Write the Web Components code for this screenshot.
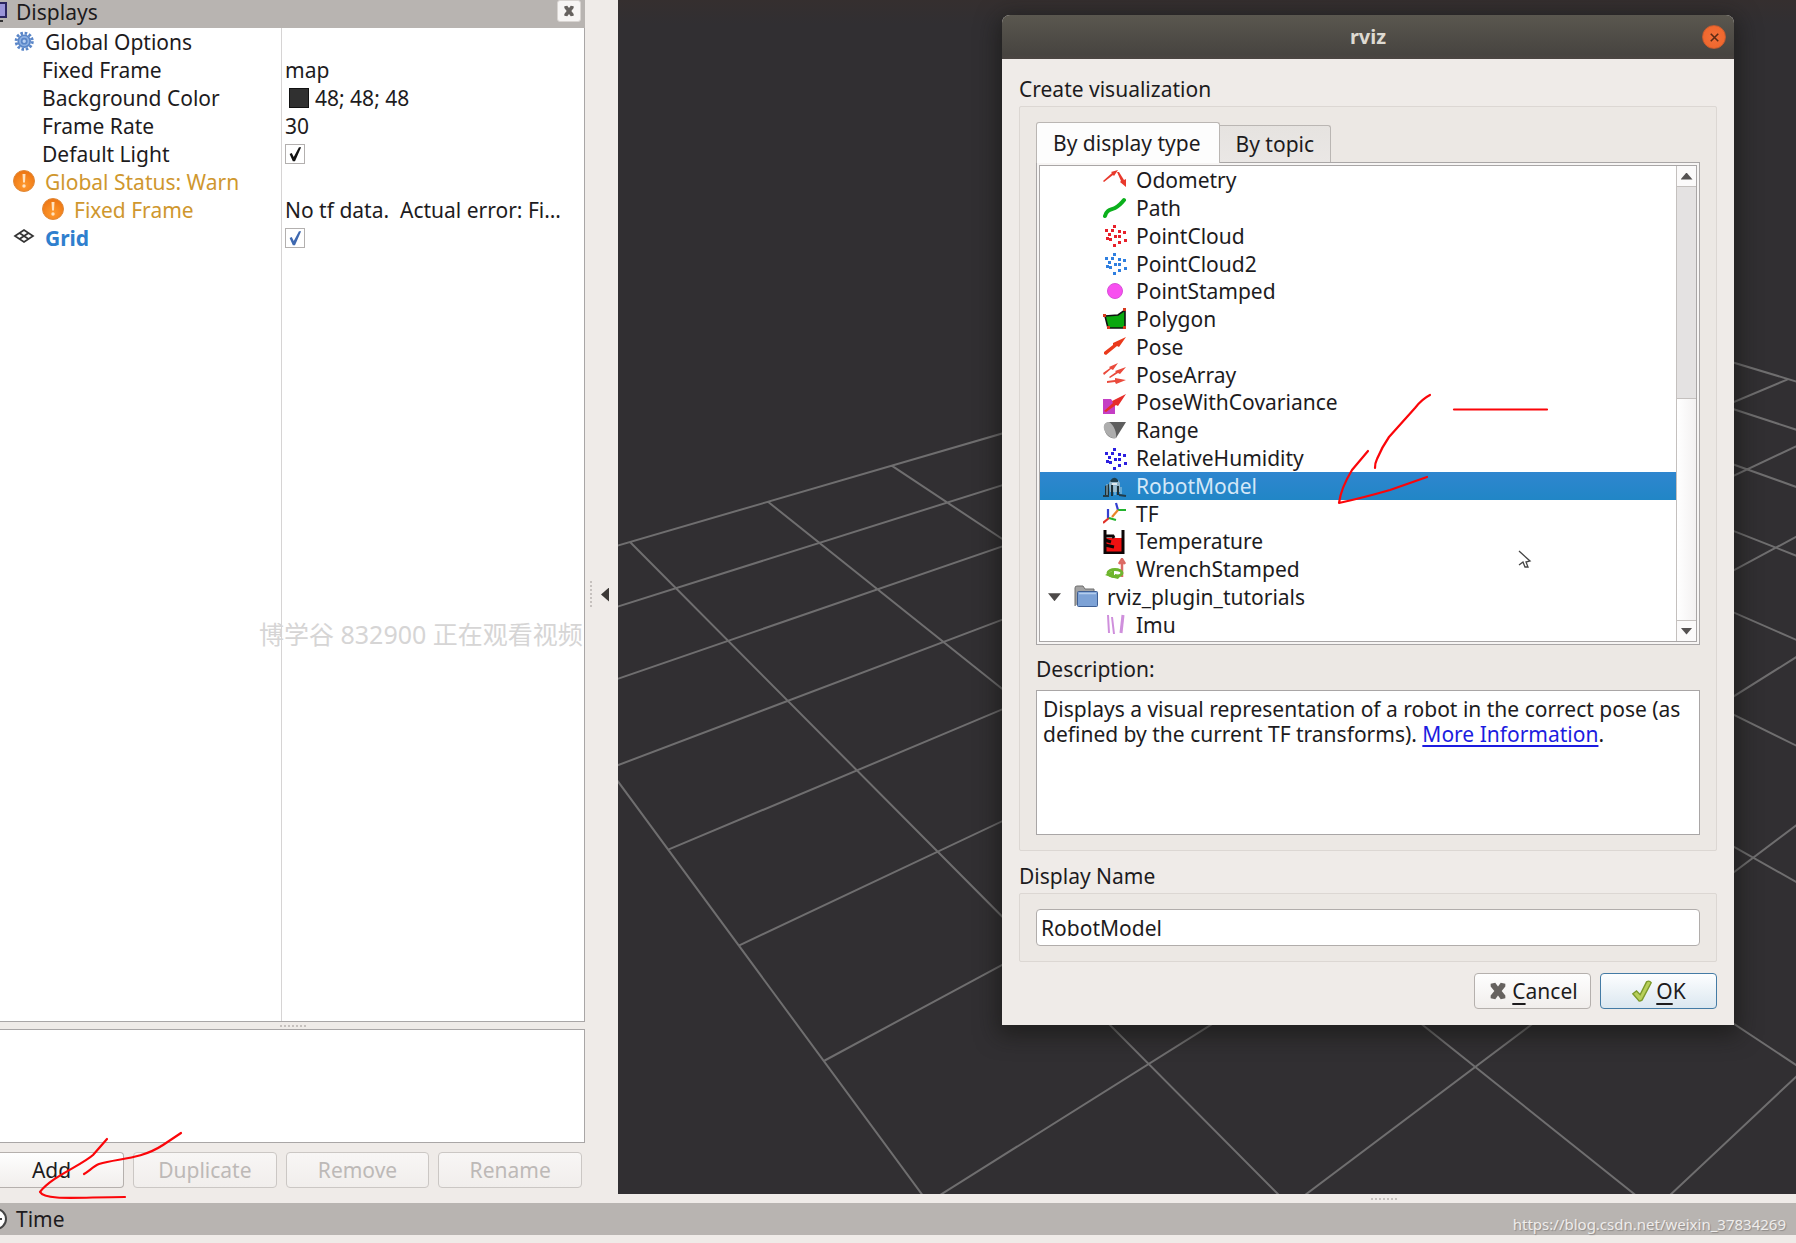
<!DOCTYPE html>
<html lang="en">
<head>
<meta charset="utf-8">
<title>rviz</title>
<style>
html,body{height:100%;margin:0}
body{overflow:hidden;background:#efebe8;color:#1d1b1d;
font:21px/28px "Noto Sans","Noto Sans CJK SC",sans-serif;
--panel:#efebe8;--bar:#b8b4b1;--edge:#a9a6a6;--soft:#dcd7d3}
</style>
</head>
<body>
<rviz-app></rviz-app>
<script>
const define = (name, html, setup) => customElements.define(name, class extends HTMLElement {
  connectedCallback() {
    if (this.shadowRoot) return;
    const root = this.attachShadow({ mode: 'open' });
    const t = document.createElement('template');
    t.innerHTML = '<style>*{box-sizing:border-box}:host{display:block;box-sizing:border-box}</style>' + html;
    root.append(t.content.cloneNode(true));
    if (setup) setup(root, this);
  }
});

/* ---- icons, drawn in a 24 x 24 box ---- */
const cloud = c => `<g fill="${c}">` + [[10,0],[2,4],[8,4],[15,5],[20,6],[5,8],[11,10],[15,10],[3,12],[6,13],[21,14],[15,16],[10,19]]
  .map(([x, y]) => `<rect x="${x}" y="${y + 1}" width="3" height="3"/>`).join('') + '</g>';
const arrow = 'M1 20L10 12L9 10L23 3L15 15L13 14L3 21Z';
const warn = '<defs><radialGradient id="w" cx=".5" cy=".7" r=".7"><stop offset="0" stop-color="#ff9a2e"/><stop offset="1" stop-color="#ec7412"/></radialGradient></defs><circle cx="12" cy="11" r="10.500" fill="url(#w)" stroke="#e08a3a"/><path d="M10.500 4h3l-.5 8.500h-2z" fill="#ffe3c0"/><circle cx="12" cy="16" r="1.700" fill="#ffe3c0"/>';
const ICONS = {
  odometry: '<g fill="#e8392c"><path d="M0 12L9 4L8 3L15 1L11 7L10 6L1 13Z"/><path d="M14 3L16 3L21 11L23 10L23 18L17 13L18 12Z"/></g>',
  path: '<path d="M2 19C4 12 8 13 12 11S17 8 21 3" fill="none" stroke="#0bb01c" stroke-width="4" stroke-linecap="round"/>',
  cloudRed: cloud('#e8202a'), cloudBlue: cloud('#2f7fe0'), cloudIndigo: cloud('#2c1fe0'),
  point: '<circle cx="12" cy="11" r="7.500" fill="#f84ff0" stroke="#d84fd8"/>',
  polygon: '<path d="M2 8L15 7L22 2V20L5 20Z" fill="#0aa80f" stroke="#111" stroke-width="1.600"/><g fill="#d63a1e"><rect y="6" width="3" height="3"/><rect x="20" y="0" width="3" height="3"/><rect x="4" y="18" width="3" height="3"/><rect x="20" y="18" width="3" height="3"/></g>',
  pose: '<path d="M1 17L10 10L10 8L23 2L16 12L14 11L3 20L1 19Z" fill="#ea3a1c"/>',
  poseArray: '<g fill="#ea4a3c"><path d="M0 10L7 5L6 4L15 0L10 7L8 6L1 12Z"/><path d="M6 14L13 9L12 8L23 4L17 11L15 10L7 15Z"/><path d="M4 18L12 17V15L23 17L13 21L12 19L4 20Z"/></g>',
  poseCov: `<path d="M0 8H8L12 14V23H0Z" fill="#c43ec4"/><path d="${arrow}" fill="#e62e2a"/>`,
  range: '<path d="M6 3H23L13 19C9 20 4 18 2 12C0 6 2 4 6 3Z" fill="#5e5e5e"/><path d="M6 3C11 6 14 14 13 19C8 20 3 16 1 10C0 6 2 3 6 3Z" fill="#adadad"/>',
  robot: '<path d="M6 9Q12 0 17 9V18H7Z" fill="#8fb4c8"/><path d="M7 7Q11 1 15 6V8H8Z" fill="#203f4c"/><path d="M2 12L6 10V21H2ZM8 11H10V22H8ZM14 12H16V21H14Z" fill="#1c3037"/><path d="M0 22H6M16 21L23 22" stroke="#223c49" stroke-width="2"/><path d="M9 9H14V11H9Z" fill="#dfe9ee"/><path d="M4 10V21M12 12V21M18 13V20" stroke="#a9cbdc"/>',
  tf: '<g fill="none" stroke-width="2.200"><path d="M5 16V7M15 8L13 1" stroke="#3340d0"/><path d="M6 16L0 21" stroke="#e03228"/><path d="M6 16L13 18M15 8H23" stroke="#22b32e"/><path d="M15 8L9 15" stroke="#e8852a"/></g>',
  temperature: '<rect x="3" y="8" width="17" height="15" fill="#f01010"/><path d="M2 0V23H20V0" fill="none" stroke="#0c0606" stroke-width="3"/><path d="M2 6H10L11 8M2 10L8 12M2 15L11 17" fill="none" stroke="#0c0606" stroke-width="3"/>',
  wrench: '<path d="M19 19V4M16 6L19 1L22 6" fill="none" stroke="#dc6a64" stroke-width="2.500"/><ellipse cx="12" cy="15" rx="7" ry="3.500" fill="none" stroke="#6eb52e" stroke-width="3"/><path d="M2 17L11 12V20ZM12 16L18 17L15 21L11 20Z" fill="#6eb52e"/>',
  folder: '<path d="M1 21V3Q1 1 3 1H9L11 4H20V8" fill="#a3a3a3" stroke="#6f6f6f"/><rect x="3.500" y="6.500" width="20" height="15" rx="1" fill="#7da2d6" stroke="#3f5f94"/><path d="M5 8.500H22" stroke="#b4cdee" stroke-width="1.500"/>',
  imu: '<g stroke="#cf8fdc" fill="none" stroke-width="2"><path d="M5 2L6 20M9 4L11 21"/><path d="M20 2L18 20" stroke-width="3"/></g>',
  gear: '<g transform="translate(2 1) scale(.85)" stroke="#5a86c8" fill="none"><circle cx="12" cy="12" r="9.500" stroke-width="3.500" stroke-dasharray="3 2"/><circle cx="12" cy="12" r="7" fill="#8db0e2" stroke-width="2"/><circle cx="12" cy="12" r="3" fill="#b8d0f2" stroke-width="2"/></g>',
  warn,
  grid: '<path d="M3 10L12 4L21 10L12 16ZM7.500 7L16.500 13M16.500 7L7.500 13" fill="none" stroke="#333" stroke-width="1.700"/>',
  monitor: '<rect x="-6" y="3" width="12" height="14" fill="#9a94d8" stroke="#2b2560" stroke-width="2"/><path d="M-2 21H3" stroke="#333" stroke-width="2"/>',
  clock: '<circle cx="-4" cy="12" r="10" fill="#fff" stroke="#444" stroke-width="2"/><path d="M0 12H2" stroke="#444" stroke-width="2"/>',
  cross: '<path d="M4 4L9 3L12 7L15 3L20 4L20 7L16 12L20 17L20 20L15 21L12 17L9 21L4 20L4 17L8 12L4 7Z" fill="#66625f"/>',
  tick: '<path d="M2 15L6 12L10 16L17 2Q20 0 22 3L12 22Q9 24 8 22Z" fill="#b7cf5a" stroke="#7c9a2c" stroke-width="1.500"/>',
  thin: '<path d="M6 6L18 18M18 6L6 18" stroke="#5b2a14" stroke-width="2.500"/>'
};
define('rviz-icon', '<style>:host{flex:none;width:24px;height:24px}svg{display:block;width:100%;height:100%}</style><svg viewBox="0 0 24 24" aria-hidden="true"></svg>',
  (root, el) => { root.querySelector('svg').innerHTML = ICONS[el.getAttribute('name')] || ''; });
const setIcon = (icon, name, box) => {
  const svg = icon.shadowRoot.querySelector('svg');
  svg.innerHTML = ICONS[name];
  if (box) svg.setAttribute('viewBox', box);
};

/* ---- push button ---- */
define('push-button', `<style>
:host{display:flex}
button{flex:1;display:flex;align-items:center;justify-content:center;gap:3px;height:36px;padding:0;font:inherit;color:inherit;
 border:1px solid #b5b0ad;border-radius:4px;background:linear-gradient(#fefefe,#f1eeec)}
button:disabled{color:#bdb9b7;border-color:#cbc7c4;background:linear-gradient(#f8f6f5,#f1eeec)}
:host([cut]) button{border-left:0;border-radius:0 4px 4px 0;padding-right:20px}
:host([primary]) button{border:1px solid #447ba5;background:linear-gradient(#fdfeff,#dbe7f0)}
</style><button type="button"><slot></slot></button>`,
  (root, el) => { root.querySelector('button').disabled = el.hasAttribute('off'); });

/* ---- title bar of a docked panel ---- */
define('dock-title', `<style>
:host{display:flex;align-items:center;background:var(--bar);height:28px;line-height:25px}
rviz-icon{width:14px;margin-right:2px;align-self:flex-start}
span{flex:1;align-self:flex-start}
:host([tall]){height:32px;line-height:32px}
:host([tall]) rviz-icon{align-self:center}
</style><rviz-icon></rviz-icon><span><slot></slot></span><slot name="end"></slot>`,
  (root, el) => setIcon(root.querySelector('rviz-icon'), el.getAttribute('icon'), '0 0 14 24'));

/* ---- property tree ---- */
define('property-tree', `<style>
:host{display:flex;overflow:hidden;background:linear-gradient(90deg,#fff 281px,#d6d4d4 281px,#d6d4d4 282px,#fff 282px);
 border:solid var(--edge);border-width:0 1px 1px 0}
table{width:100%;border-collapse:collapse;table-layout:fixed;align-self:flex-start}
th,td{height:28px;padding:0;font-weight:400;text-align:left;white-space:pre;vertical-align:middle}
th{width:282px} td{padding-left:3px}
div{display:flex;align-items:center}
.l1{padding-left:12px;gap:9px}.l2{padding-left:42px}.l3{padding-left:41px;gap:9px}
.warn{color:#cf972e}.on{color:#2f7fce;font-weight:700}
i{width:20px;height:20px;background:#303030;border:1px solid #111;margin:0 6px 0 4px}
input{appearance:none;display:block;margin:0;width:20px;height:20px;border:1px solid #b3b0af;background:#fff;color:#111}
input::before{content:"";display:block;width:18px;height:18px;background:currentColor;clip-path:polygon(20% 50%,32% 44%,43% 66%,72% 12%,84% 12%,50% 90%,38% 90%)}
input.blue{color:#3e68b0}
</style><table aria-label="Displays"><tbody>
<tr><th scope="row"><div class="l1"><rviz-icon name="gear"></rviz-icon>Global Options</div></th><td></td></tr>
<tr><th scope="row"><div class="l2">Fixed Frame</div></th><td>map</td></tr>
<tr><th scope="row"><div class="l2">Background Color</div></th><td><div><i></i>48; 48; 48</div></td></tr>
<tr><th scope="row"><div class="l2">Frame Rate</div></th><td>30</td></tr>
<tr><th scope="row"><div class="l2"><label for="light">Default Light</label></div></th><td><input id="light" type="checkbox" checked></td></tr>
<tr><th scope="row"><div class="l1 warn"><rviz-icon name="warn"></rviz-icon>Global Status: Warn</div></th><td></td></tr>
<tr><th scope="row"><div class="l3 warn"><rviz-icon name="warn"></rviz-icon>Fixed Frame</div></th><td>No tf data.  Actual error: Fi…</td></tr>
<tr><th scope="row"><div class="l1 on"><rviz-icon name="grid"></rviz-icon><label for="grid">Grid</label></div></th><td><input class="blue" id="grid" type="checkbox" checked></td></tr>
</tbody></table>`);

define('splitter-dots', `<style>
:host{display:flex;align-items:center;justify-content:center;height:7px}
b{width:26px;height:2px;background:repeating-linear-gradient(90deg,#c6c1be 0 2px,transparent 2px 4px)}
:host([upright]) b{width:2px;height:28px;background:repeating-linear-gradient(#c6c1be 0 2px,transparent 2px 4px)}
</style><b></b>`);

/* ---- left dock ---- */
define('displays-dock', `<style>
:host{display:flex;flex-direction:column;width:585px;flex:none}
.close{display:flex;align-items:center;justify-content:center;align-self:flex-start;width:24px;height:22px;margin-right:4px;padding:0;border:1px solid #d8d4d1;border-radius:3px;background:#f7f5f4}
.close rviz-icon{width:14px;height:14px}
property-tree{flex:1}
.note{height:114px;background:#fff;border:solid var(--edge);border-width:1px 1px 1px 0}
.row{display:flex;gap:9px;padding:9px 3px 15px 0}
.row push-button{flex:1}.row push-button[cut]{flex:0 0 124px}
</style>
<dock-title icon="monitor">Displays<button slot="end" class="close" aria-label="Close"><rviz-icon name="cross"></rviz-icon></button></dock-title>
<property-tree></property-tree>
<splitter-dots></splitter-dots>
<div class="note"></div>
<div class="row"><push-button cut>Add</push-button><push-button off>Duplicate</push-button><push-button off>Remove</push-button><push-button off>Rename</push-button></div>`);

define('dock-gutter', `<style>
:host{display:flex;align-items:center;width:33px;flex:none;padding-bottom:14px}
splitter-dots{width:11px;height:auto}
button{border:0;padding:0;margin-left:5px;width:8px;height:14px;background:#3c3836;clip-path:polygon(100% 0,100% 100%,0 50%)}
</style><splitter-dots upright></splitter-dots><button aria-label="Hide left panel"></button>`);

/* ---- ground plane: 10 x 10 cells seen in perspective ---- */
define('ground-grid', `<style>
:host{overflow:hidden;background:linear-gradient(#352f2f,#312f32 24px)}
svg{display:block;width:100%;height:100%}
path{stroke:#6f6e6f;stroke-width:2;fill:none}
</style><svg aria-hidden="true"><path/></svg>`, root => {
  const at = (i, k) => {
    const w = 1 - .0595 * i + .058 * k;
    return ((630 + 5.75 * i + 182.57 * k) / w - 618).toFixed(1) + ' ' + ((542 + 11.26 * i - 11.14 * k) / w).toFixed(1);
  };
  let d = '';
  for (let n = 0; n <= 10; n++) d += `M${at(n, -1)}L${at(n, 9)}M${at(0, n - 1)}L${at(10, n - 1)}`;
  root.querySelector('path').setAttribute('d', d);
});

/* ---- list of display types ---- */
define('type-row', `<style>
:host{display:flex;align-items:center;gap:9px;padding-left:63px;min-height:0;line-height:27px}
:host([selected]){background:linear-gradient(#2f86cf,#2186c6);color:#d3e8f8}
:host([group]){padding-left:8px}
em{display:none;width:13px;height:8px;margin-right:4px;background:#4d4a49;clip-path:polygon(0 0,100% 0,50% 100%)}
:host([group]) em{display:block}
</style><em></em><rviz-icon></rviz-icon><slot></slot>`,
  (root, el) => setIcon(root.querySelector('rviz-icon'), el.getAttribute('icon')));

define('scroll-bar', `<style>
:host{display:flex;flex-direction:column;width:20px;border-left:1px solid #c4c0be;background:#e4e2e2}
button{flex:none;height:20px;border:0;padding:0;background:#fbfafa;display:flex;align-items:center;justify-content:center}
button::before{content:"";width:12px;height:7px;background:#555251;clip-path:polygon(50% 0,100% 100%,0 100%)}
.down::before{clip-path:polygon(0 0,100% 0,50% 100%)}
.gap{flex:212;border-top:1px solid #c4c0be}
.thumb{flex:223;background:linear-gradient(90deg,#fff,#f3f1f1);border:solid #c4c0be;border-width:1px 0}
</style><button aria-label="Scroll up"></button><div class="gap"></div><div class="thumb"></div><button class="down" aria-label="Scroll down"></button>`);

define('type-list', `<style>
:host{display:flex;height:483px;padding:2px;border:1px solid var(--edge);background:#f7f5f4}
.frame{flex:1;display:flex;border:1px solid var(--edge);background:#fff}
.rows{flex:1;display:grid;grid-auto-rows:1fr;padding:1px 0 2px}
</style><div class="frame"><div class="rows" role="listbox" aria-label="Display types">
<type-row icon="odometry">Odometry</type-row>
<type-row icon="path">Path</type-row>
<type-row icon="cloudRed">PointCloud</type-row>
<type-row icon="cloudBlue">PointCloud2</type-row>
<type-row icon="point">PointStamped</type-row>
<type-row icon="polygon">Polygon</type-row>
<type-row icon="pose">Pose</type-row>
<type-row icon="poseArray">PoseArray</type-row>
<type-row icon="poseCov">PoseWithCovariance</type-row>
<type-row icon="range">Range</type-row>
<type-row icon="cloudIndigo">RelativeHumidity</type-row>
<type-row icon="robot" selected>RobotModel</type-row>
<type-row icon="tf">TF</type-row>
<type-row icon="temperature">Temperature</type-row>
<type-row icon="wrench">WrenchStamped</type-row>
<type-row icon="folder" group>rviz_plugin_tutorials</type-row>
<type-row icon="imu">Imu</type-row>
</div><scroll-bar></scroll-bar></div>`);

/* ---- dialog ---- */
define('create-dialog', `<style>
:host{display:flex;flex-direction:column;width:732px;border-radius:8px 8px 0 0;background:var(--panel);box-shadow:0 6px 22px 4px rgba(20,20,16,.6)}
header{display:flex;align-items:center;height:44px;padding:0 8px 0 32px;border-radius:8px 8px 0 0;background:linear-gradient(#5a574f,#474440 90%,#4b4542);color:#dedad2}
h1{flex:1;margin:0;text-align:center;font-size:20px;font-weight:700;line-height:28px}
.close{width:24px;height:24px;padding:0;display:flex;align-items:center;justify-content:center;border:1px solid #c25a30;border-radius:50%;background:radial-gradient(#f4703a,#ee6428)}
.close rviz-icon{width:15px;height:15px}
main{padding:16px 17px}
h2,label{display:block;margin:0;font:inherit}
.group{border:1px solid var(--soft);border-radius:2px;background:#ece8e4;padding:15px 16px;margin-top:3px}
[role=tablist]{display:flex;align-items:flex-end;height:40px}
[role=tab]{height:37px;padding:0 16px;font:inherit;color:inherit;border:1px solid #bab6b3;border-left:0;border-bottom:0;border-radius:0 3px 0 0;background:linear-gradient(#e6e3e0,#eae7e5)}
[role=tab][aria-selected=true]{position:relative;height:41px;margin-bottom:-1px;padding-right:18px;border-left:1px solid #bab6b3;border-radius:3px 3px 0 0;background:#fdfdfd}
.desc{margin-top:10px}
.text{height:145px;margin-top:7px;padding:6px;border:1px solid var(--edge);background:#fff;line-height:25px}
.text p{margin:0}
a{color:#1c1ce0;text-underline-offset:3px}
.name{margin-top:11px}
input{display:block;width:100%;height:37px;padding:0 4px;font:inherit;color:inherit;border:1px solid #b1adab;border-radius:4px;background:#fff}
footer{display:flex;justify-content:flex-end;gap:9px;margin-top:11px}
push-button{width:117px}
footer rviz-icon{width:22px;height:22px}
u{text-underline-offset:4px}
</style>
<header><h1>rviz</h1><button class="close" aria-label="Close"><rviz-icon name="thin"></rviz-icon></button></header>
<main>
<h2>Create visualization</h2>
<div class="group">
 <div role="tablist"><button role="tab" aria-selected="true">By display type</button><button role="tab" aria-selected="false">By topic</button></div>
 <type-list></type-list>
 <h2 class="desc">Description:</h2>
 <div class="text"><p>Displays a visual representation of a robot in the correct pose (as defined by the current TF transforms). <a href="#more">More Information</a>.</p></div>
</div>
<label class="name" for="name">Display Name</label>
<div class="group"><input id="name" type="text" value="RobotModel"></div>
<footer><push-button><rviz-icon name="cross"></rviz-icon><span><u>C</u>ancel</span></push-button><push-button primary><rviz-icon name="tick"></rviz-icon><span><u>O</u>K</span></push-button></footer>
</main>`);

/* ---- pen strokes and pointer over the screen ---- */
define('pen-marks', `<style>
:host{position:absolute;inset:0;pointer-events:none;overflow:hidden}
svg{display:block;width:1796px;height:1243px}
</style><svg viewBox="0 0 1796 1243" aria-hidden="true">
<g fill="none" stroke="#fb0509" stroke-width="2.200" stroke-linecap="round" stroke-linejoin="round">
<path d="M1430 395Q1422 399 1415 408L1389 437Q1382 447 1377 459Q1375 463 1375 468"/>
<path d="M1368 451L1352 470Q1341 488 1339 503Q1362 498 1390 490L1427 477"/>
<path d="M1454 409.500H1547"/>
<path d="M107 1139L93 1155C82 1165 51 1177 40 1192C45 1201 80 1197 125 1197"/>
<path d="M181 1133L163 1145C140 1160 118 1158 99 1164C94 1166 89 1171 84 1174"/>
</g>
<path d="M1519 551L1530 561L1526 562L1528 567L1525 567L1523 562L1519 565" fill="#fff" stroke="#444" stroke-width="1.300"/>
</svg>`);

define('rviz-app', `<style>
:host{display:flex;flex-direction:column;height:100vh;position:relative;overflow:hidden}
.work{flex:1;display:flex;min-height:0}
.view{flex:1;display:flex;flex-direction:column;min-width:0;position:relative}
ground-grid{flex:1;min-height:0}
.view splitter-dots{height:9px;padding-left:30%}
create-dialog{position:absolute;top:15px;right:62px}
dock-title{margin-bottom:8px}
.stamp,.source{position:absolute;color:#d6d5d5;white-space:nowrap}
.stamp{left:259px;top:620px;font-size:25px}
.source{right:10px;bottom:5px;font-size:15px;color:#efedec;text-shadow:1px 1px 1px #8f8b89}
</style>
<div class="work"><displays-dock></displays-dock><dock-gutter></dock-gutter>
<div class="view"><ground-grid></ground-grid><splitter-dots></splitter-dots><create-dialog></create-dialog></div></div>
<dock-title tall icon="clock">Time</dock-title>
<div class="stamp">博学谷 832900 正在观看视频</div>
<div class="source">https://blog.csdn.net/weixin_37834269</div>
<pen-marks></pen-marks>`);
</script>
</body>
</html>
